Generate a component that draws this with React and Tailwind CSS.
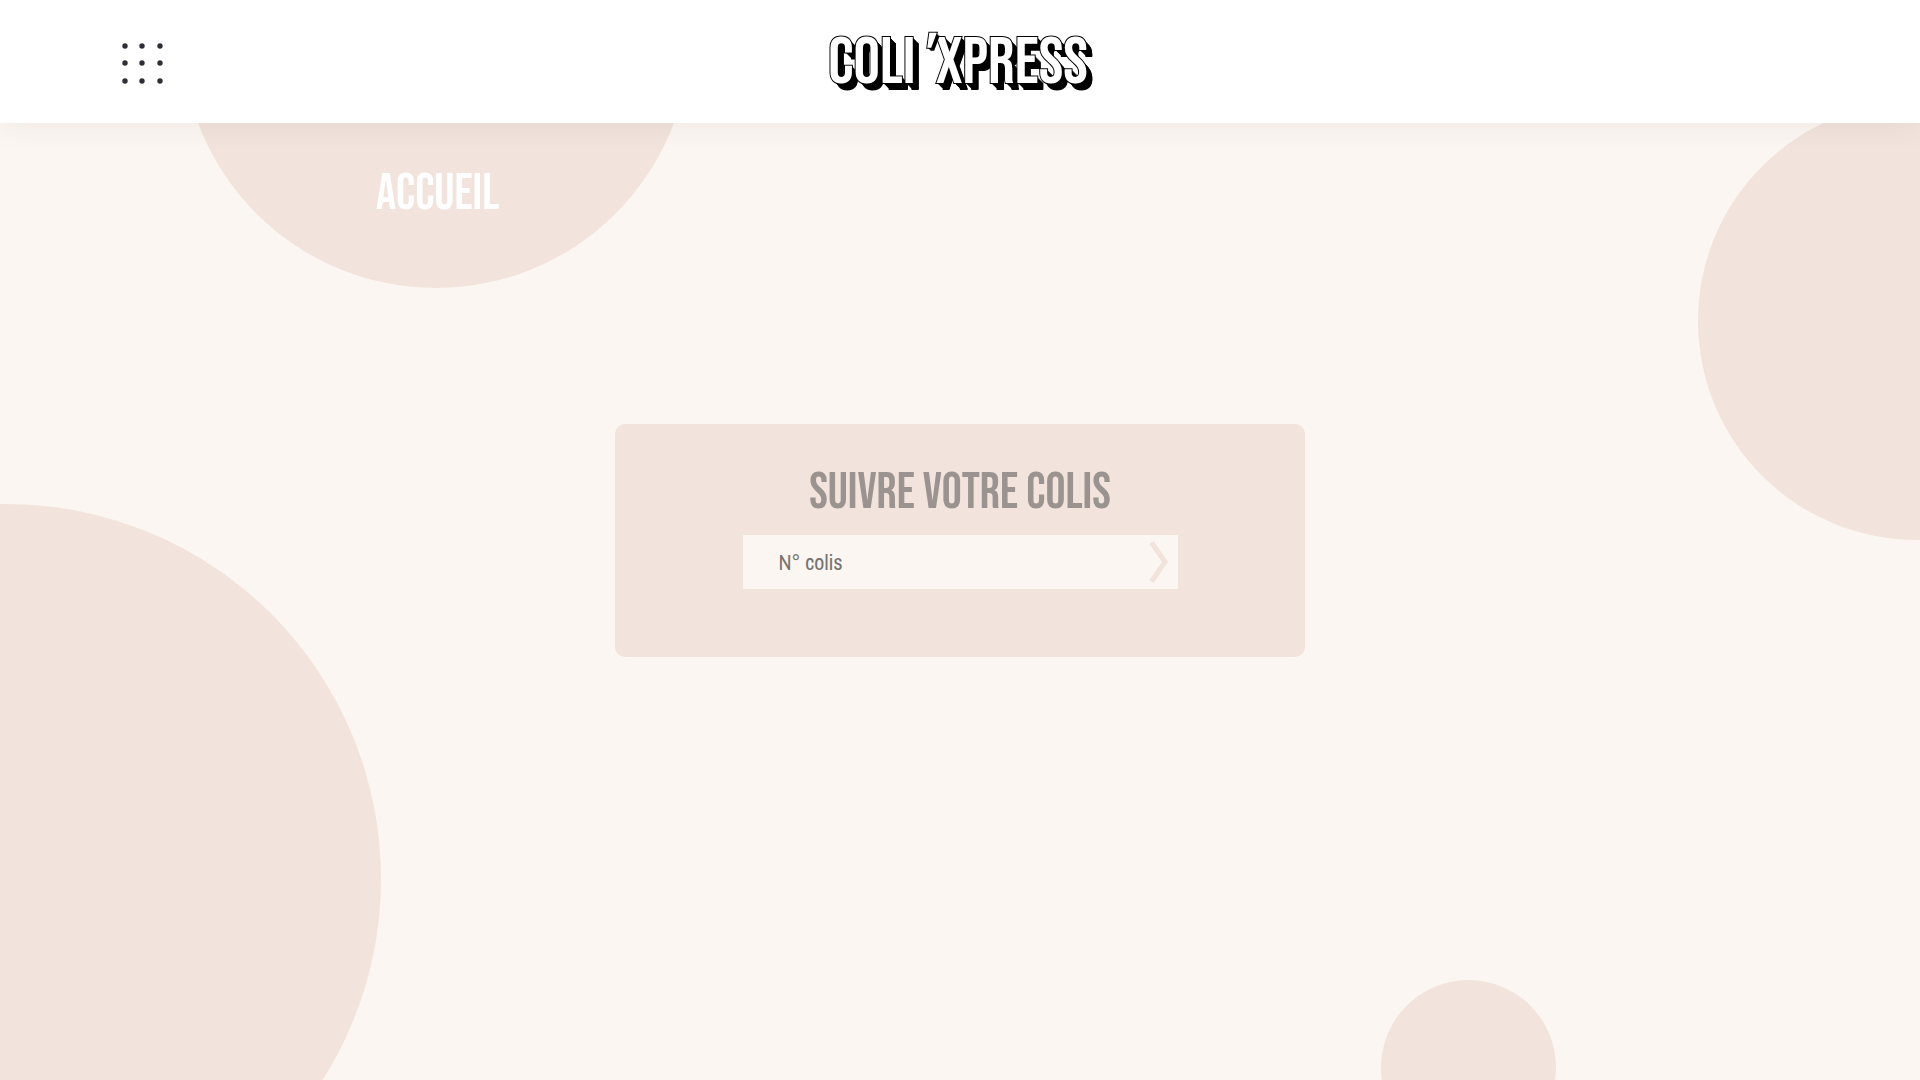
const dots = [3, 20, 38];

function MenuIcon() {
  return (
    <svg width="41" height="41" viewBox="0 0 41 41" fill="#2f2e36" aria-hidden="true">
      {dots.map((y) => dots.map((x) => <circle key={`${x}-${y}`} cx={x} cy={y} r="2.7" />))}
    </svg>
  );
}

function Logo() {
  return (
    <a
      href="#"
      className="flex pr-1 font-['Bebas_Neue','Oswald',sans-serif] text-[66px] leading-[66px] whitespace-nowrap text-white [-webkit-text-stroke:2px_#000] [paint-order:stroke_fill] [text-shadow:1px_1px_0_#000,2px_2px_0_#000,3px_3px_0_#000,4px_4px_0_#000,5px_5px_0_#000,6px_6px_0_#000,6px_7px_0_#000]"
    >
      <span>COLI</span>
      <span className="z-10 -mt-1 mr-2 italic [text-shadow:1px_1px_0_#000,2px_2px_0_#000,3px_3px_0_#000]">'</span>
      <span>XPRESS</span>
    </a>
  );
}

function Header() {
  return (
    <header className="relative z-10 grid h-[123px] grid-cols-[1fr_auto_1fr] items-center bg-white px-[122px] pt-1 shadow-[0_5px_30px_rgba(0,0,0,0.05)]">
      <button type="button" aria-label="Menu" className="size-[41px] justify-self-start">
        <MenuIcon />
      </button>
      <Logo />
    </header>
  );
}

function Bubbles() {
  return (
    <div aria-hidden="true">
      <div className="absolute -top-[220px] left-[182px] size-[508px] rounded-full bg-[#f2e3dc]" />
      <div className="absolute top-[102px] -right-[216px] size-[438px] rounded-full bg-[#f2e3dc]" />
      <div className="absolute top-[504px] -left-[369px] size-[750px] rounded-full bg-[#f2e3dc]" />
      <div className="absolute top-[980px] right-[364px] size-[175px] rounded-full bg-[#f2e3dc]" />
    </div>
  );
}

function TrackingForm() {
  return (
    <form
      onSubmit={(e) => e.preventDefault()}
      className="mx-auto flex w-full max-w-[690px] flex-col items-center rounded-[10px] bg-[#f2e3dc] pt-[39px] pb-[68px]"
    >
      <label
        htmlFor="parcel"
        className="font-['Bebas_Neue','Oswald',sans-serif] text-[50px] leading-[60px] text-[#9a938f]"
      >
        Suivre votre colis
      </label>
      <div className="mt-3 flex h-[54px] w-full max-w-[435px] items-center bg-[#fbf6f1] pr-2">
        <input
          id="parcel"
          type="text"
          placeholder="N° colis"
          className="h-full min-w-0 flex-1 bg-transparent pl-9 font-['Archivo_Narrow','Roboto_Condensed',sans-serif] text-[22px] text-[#2b2b2b] outline-none placeholder:text-[#757270]"
        />
        <button type="submit" aria-label="Suivre">
          <svg width="22" height="44" viewBox="0 0 22 44" fill="none" stroke="#f2e3dc" strokeWidth="5" aria-hidden="true">
            <path d="M3.5 2.5 L17 22 L3.5 41.5" />
          </svg>
        </button>
      </div>
    </form>
  );
}

export default function App() {
  return (
    <div className="relative flex min-h-screen flex-col overflow-hidden bg-[#fbf6f1]">
      <Bubbles />
      <Header />
      <nav className="relative pt-[41px] pl-[376px]">
        <a
          href="#"
          className="inline-block font-['Bebas_Neue','Oswald',sans-serif] text-[50px] leading-[60px] text-white"
        >
          Accueil
        </a>
      </nav>
      <main className="relative pt-[200px] pb-20">
        <TrackingForm />
      </main>
    </div>
  );
}
